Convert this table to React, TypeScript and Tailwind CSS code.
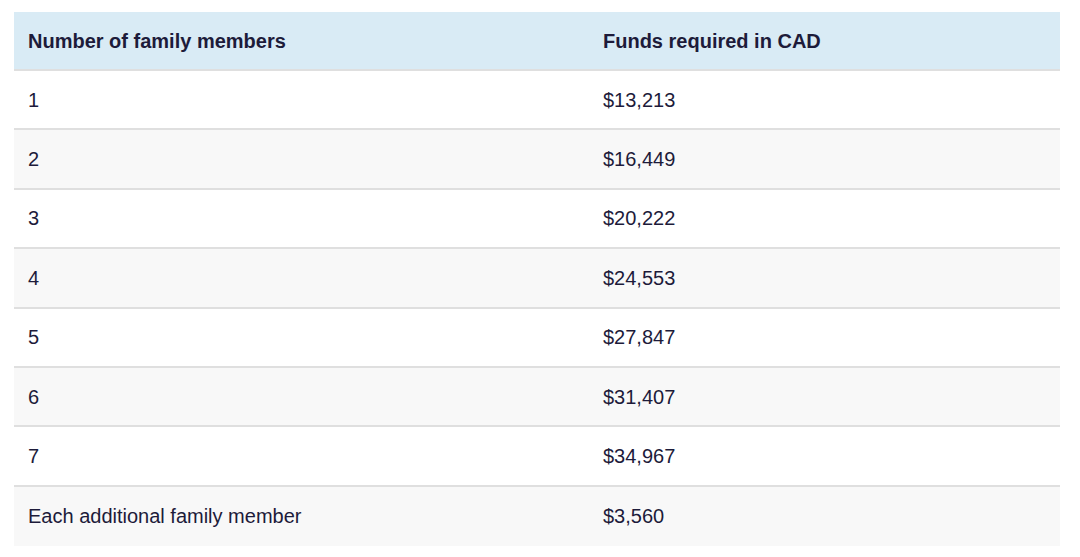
import React from "react";

const rows: [string, string][] = [
  ["1", "$13,213"],
  ["2", "$16,449"],
  ["3", "$20,222"],
  ["4", "$24,553"],
  ["5", "$27,847"],
  ["6", "$31,407"],
  ["7", "$34,967"],
  ["Each additional family member", "$3,560"],
];

export default function App() {
  return (
    <div className="w-[1080px] h-[557px] bg-white pt-[12px] pl-[14px] font-['Liberation_Sans',Arial,sans-serif] text-[#1d1b3a]">
      <div className="w-[1046px]">
        <div className="grid grid-cols-[575px_1fr] h-[59px] items-center bg-[#d9ebf5] border-b-2 border-[#dfdfdf] text-[20px] font-bold">
          <div className="pl-[14px]">Number of family members</div>
          <div className="pl-[14px]">Funds required in CAD</div>
        </div>
        {rows.map(([a, b], i) => (
          <div
            key={i}
            className={`grid grid-cols-[575px_1fr] h-[59.4px] items-center text-[20px] ${
              i % 2 === 1 ? "bg-[#f8f8f8]" : "bg-white"
            } ${i < rows.length - 1 ? "border-b-2 border-[#dfdfdf]" : ""}`}
          >
            <div className="pl-[14px]">{a}</div>
            <div className="pl-[14px]">{b}</div>
          </div>
        ))}
      </div>
    </div>
  );
}
